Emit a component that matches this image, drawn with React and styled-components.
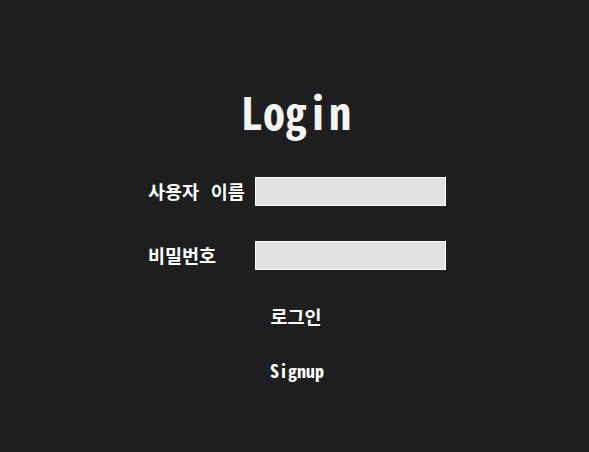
import React, { useState } from 'react';
import styled, { createGlobalStyle } from 'styled-components';

const GlobalStyle = createGlobalStyle`
  html, body {
    margin: 0;
    padding: 0;
    background: #1e1e20;
  }
  body {
    font-family: "Noto Sans Mono CJK KR", "Noto Sans CJK KR", "DejaVu Sans Mono", monospace;
    color: #ffffff;
  }
`;

const Page = styled.div`
  min-height: 100vh;
  display: flex;
  flex-direction: column;
  align-items: center;
  padding-top: 89px;
  box-sizing: border-box;
`;

const Title = styled.h1`
  margin: 0 0 0 3px;
  font-size: 44px;
  line-height: 44px;
  font-weight: bold;
  color: #f4f4f4;
`;

const Form = styled.form`
  display: flex;
  flex-direction: column;
  align-items: center;
  margin-top: 44px;
  margin-left: 5px;
`;

const Row = styled.div`
  display: flex;
  align-items: center;
  margin-bottom: ${(p) => p.$gap || 0}px;
`;

const Label = styled.label`
  width: 107px;
  font-size: 18.5px;
  font-weight: bold;
  line-height: 29px;
  word-spacing: 2.5px;
  color: #ffffff;
  white-space: nowrap;
`;

const Input = styled.input`
  width: 191px;
  height: 29px;
  box-sizing: border-box;
  background: #e0e0e0;
  border: 1px solid #ffffff;
  padding: 0 6px;
  font-family: inherit;
  font-size: 15px;
  outline: none;
`;

const TextButton = styled.button`
  background: none;
  border: none;
  padding: 0;
  margin-top: ${(p) => p.$top}px;
  margin-right: ${(p) => p.$shift || 0}px;
  font-family: inherit;
  font-size: ${(p) => p.$size || 18}px;
  line-height: 24px;
  font-weight: bold;
  color: #ffffff;
  cursor: pointer;
`;

export default function App() {
  const [username, setUsername] = useState('');
  const [password, setPassword] = useState('');

  return (
    <>
      <GlobalStyle />
      <Page>
        <Title>Login</Title>
        <Form onSubmit={(e) => e.preventDefault()}>
          <Row $gap={35}>
            <Label htmlFor="username">사용자 이름</Label>
            <Input id="username" value={username} onChange={(e) => setUsername(e.target.value)} />
          </Row>
          <Row>
            <Label htmlFor="password">비밀번호</Label>
            <Input id="password" type="password" value={password} onChange={(e) => setPassword(e.target.value)} />
          </Row>
          <TextButton type="submit" $top={34} $shift={2} $size={18.5}>로그인</TextButton>
          <TextButton type="button" $top={30}>Signup</TextButton>
        </Form>
      </Page>
    </>
  );
}
